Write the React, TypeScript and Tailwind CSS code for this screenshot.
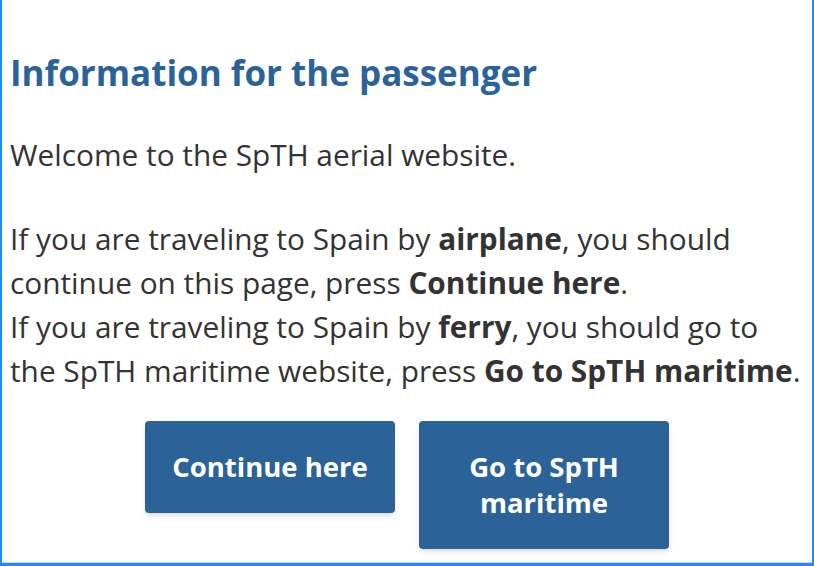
import React from 'react';

const App: React.FC = () => {
  return (
    <div className="h-[566px] w-[814px] border-x-2 border-b-[3px] border-[#1a8cff] bg-white font-['Open_Sans',sans-serif]">
      <div className="flex h-full flex-col border-b border-[#d8d8d8] pl-2 pt-[52px]">
        <h1 className="text-[35px] font-bold leading-[42px] text-[#2b6399]">
          Information for the passenger
        </h1>

        <div className="mt-[39px] pr-2 text-[29.8px] leading-[44px] text-[#333333]">
          <p>Welcome to the SpTH aerial website.</p>
          <p className="mt-10">
            If you are traveling to Spain by <b>airplane</b>, you should continue on this page, press{' '}
            <b>Continue here</b>.
          </p>
          <p>
            If you are traveling to Spain by <b>ferry</b>, you should go to the SpTH maritime website, press{' '}
            <b>Go to SpTH maritime</b>.
          </p>
        </div>

        <div className="mt-7 flex items-start justify-center gap-6 pr-2">
          <button className="w-[250px] rounded bg-[#2b6399] px-4 py-7 text-[27.5px] font-bold leading-9 text-white shadow-md">
            Continue here
          </button>
          <button className="w-[250px] rounded bg-[#2b6399] px-4 py-7 text-[27.5px] font-bold leading-9 text-white shadow-md">
            Go to SpTH maritime
          </button>
        </div>
      </div>
    </div>
  );
};

export default App;
